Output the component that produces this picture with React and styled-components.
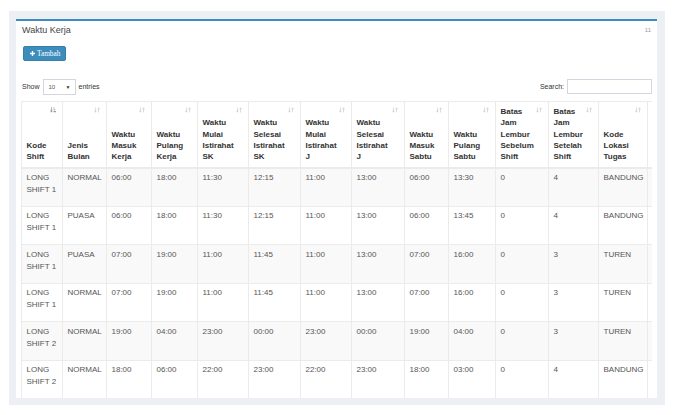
import React from "react";
import styled, { createGlobalStyle } from "styled-components";

const GlobalStyle = createGlobalStyle`
  html, body {
    margin: 0;
    padding: 0;
    background: #ffffff;
  }
  body {
    font-family: "Liberation Sans", Arial, sans-serif;
    color: #333;
  }
`;

const colors = {
  blue: "#3c8dbc",
  blueDark: "#367fa9",
  grey: "#ecf0f5",
  line: "#ebebeb",
  stripe: "#f9f9f9",
  text: "#555",
  head: "#333",
};

const Page = styled.div`
  box-sizing: border-box;
  width: 676px;
  height: 415px;
  padding: 11px 11px 10px 9px;
`;

const Content = styled.div`
  box-sizing: border-box;
  height: 100%;
  background: ${colors.grey};
  padding: 8px 8px 7px 7px;
`;

const Box = styled.div`
  box-sizing: border-box;
  height: 100%;
  background: #fff;
  border-top: 2px solid ${colors.blue};
  overflow: hidden;
  display: flex;
  flex-direction: column;
`;

const BoxHeader = styled.div`
  display: flex;
  justify-content: space-between;
  align-items: flex-start;
  padding: 4px 6px 0 6px;
  height: 11px;
`;

const Title = styled.h3`
  margin: 0;
  font-size: 9px;
  line-height: 11px;
  font-weight: 400;
  color: #444;
`;

const Counter = styled.span`
  font-size: 6px;
  line-height: 11px;
  color: #999;
`;

const BoxBody = styled.div`
  padding: 0 5px;
`;

const Toolbar = styled.div`
  display: flex;
  padding: 10px 0 0 2px;
`;

const Button = styled.button`
  box-sizing: border-box;
  display: inline-flex;
  align-items: center;
  gap: 2px;
  height: 15px;
  width: 43px;
  padding: 0 0 0 6px;
  border: 1px solid ${colors.blueDark};
  border-radius: 2px;
  background: ${colors.blue};
  color: #fff;
  font-family: "Liberation Serif", "Times New Roman", serif;
  font-size: 7.3px;
  cursor: pointer;
`;

const Controls = styled.div`
  display: flex;
  justify-content: space-between;
  align-items: center;
  margin-top: 17.5px;
  padding-left: 1px;
  height: 16px;
  font-size: 7px;
  color: #333;
`;

const Field = styled.label`
  display: flex;
  align-items: center;
  gap: 3px;
`;

const FakeSelect = styled.span`
  box-sizing: border-box;
  display: inline-flex;
  align-items: center;
  justify-content: space-between;
  width: 33px;
  height: 16px;
  padding: 0 4px 0 5px;
  border: 1px solid #d2d6de;
  font-size: 6px;
  color: #555;
`;

const Caret = styled.span`
  font-size: 5px;
  color: #333;
`;

const SearchInput = styled.span`
  box-sizing: border-box;
  display: inline-block;
  width: 85px;
  height: 15px;
  border: 1px solid #d2d6de;
`;

const TableWrap = styled.div`
  margin-top: 6.5px;
  width: 631px;
  overflow: hidden;
`;

const Table = styled.table`
  border-collapse: collapse;
  table-layout: fixed;
  width: 696px;
  font-size: 8px;
`;

const HeadCell = styled.th`
  position: relative;
  box-sizing: border-box;
  padding: 4px 14px 4.5px 4.5px;
  border: 1px solid ${colors.line};
  border-bottom-width: 2px;
  text-align: left;
  vertical-align: bottom;
  font-weight: 700;
  line-height: 11.3px;
  color: ${colors.head};
  white-space: nowrap;
`;

const SortIcon = styled.svg`
  position: absolute;
  top: 5px;
  right: 6px;
  width: 6px;
  height: 6px;
  fill: ${(p) => (p.$active ? "#9a9a9a" : "#d4d4d4")};
`;

const Row = styled.tr`
  height: 38.5px;
  background: ${(p) => (p.$odd ? colors.stripe : "#fff")};
`;

const Cell = styled.td`
  box-sizing: border-box;
  padding: 3.5px 4.5px;
  border: 1px solid ${colors.line};
  vertical-align: top;
  color: ${colors.text};
  line-height: 12px;
`;

const PlusIcon = () => (
  <svg width="5" height="5" viewBox="0 0 10 10" fill="#fff">
    <rect x="3.6" y="0" width="2.8" height="10" />
    <rect x="0" y="3.6" width="10" height="2.8" />
  </svg>
);

const SortBoth = () => (
  <SortIcon viewBox="0 0 12 12">
    <rect x="2" y="1" width="1.6" height="8" />
    <polygon points="0,7.5 5.6,7.5 2.8,11.5" />
    <rect x="8.4" y="3" width="1.6" height="8" />
    <polygon points="6.4,4.5 12,4.5 9.2,0.5" />
  </SortIcon>
);

const SortAsc = () => (
  <SortIcon viewBox="0 0 12 12" $active>
    <rect x="2" y="0.5" width="1.6" height="8" />
    <polygon points="0,7 5.6,7 2.8,11.5" />
    <rect x="7" y="1" width="2" height="2" />
    <rect x="7" y="4.5" width="3.5" height="2" />
    <rect x="7" y="8" width="5" height="2.5" />
  </SortIcon>
);

const columns = [
  { width: 41, lines: ["Kode", "Shift"] },
  { width: 44, lines: ["Jenis", "Bulan"] },
  { width: 45, lines: ["Waktu", "Masuk", "Kerja"] },
  { width: 46, lines: ["Waktu", "Pulang", "Kerja"] },
  { width: 51, lines: ["Waktu", "Mulai", "Istirahat", "SK"] },
  { width: 52, lines: ["Waktu", "Selesai", "Istirahat", "SK"] },
  { width: 51, lines: ["Waktu", "Mulai", "Istirahat", "J"] },
  { width: 53, lines: ["Waktu", "Selesai", "Istirahat", "J"] },
  { width: 44, lines: ["Waktu", "Masuk", "Sabtu"] },
  { width: 47, lines: ["Waktu", "Pulang", "Sabtu"] },
  { width: 53, lines: ["Batas", "Jam", "Lembur", "Sebelum", "Shift"] },
  { width: 50, lines: ["Batas", "Jam", "Lembur", "Setelah", "Shift"] },
  { width: 49, lines: ["Kode", "Lokasi", "Tugas"] },
  { width: 70, lines: [] },
];

const rows = [
  ["LONG SHIFT 1", "NORMAL", "06:00", "18:00", "11:30", "12:15", "11:00", "13:00", "06:00", "13:30", "0", "4", "BANDUNG"],
  ["LONG SHIFT 1", "PUASA", "06:00", "18:00", "11:30", "12:15", "11:00", "13:00", "06:00", "13:45", "0", "4", "BANDUNG"],
  ["LONG SHIFT 1", "PUASA", "07:00", "19:00", "11:00", "11:45", "11:00", "13:00", "07:00", "16:00", "0", "3", "TUREN"],
  ["LONG SHIFT 1", "NORMAL", "07:00", "19:00", "11:00", "11:45", "11:00", "13:00", "07:00", "16:00", "0", "3", "TUREN"],
  ["LONG SHIFT 2", "NORMAL", "19:00", "04:00", "23:00", "00:00", "23:00", "00:00", "19:00", "04:00", "0", "3", "TUREN"],
  ["LONG SHIFT 2", "NORMAL", "18:00", "06:00", "22:00", "23:00", "22:00", "23:00", "18:00", "03:00", "0", "4", "BANDUNG"],
];

const App = () => {
  return (
    <>
      <GlobalStyle />
      <Page>
        <Content>
          <Box>
            <BoxHeader>
              <Title>Waktu Kerja</Title>
              <Counter>11</Counter>
            </BoxHeader>

            <BoxBody>
              <Toolbar>
                <Button>
                  <PlusIcon />
                  Tambah
                </Button>
              </Toolbar>

              <Controls>
                <Field>
                  Show
                  <FakeSelect>
                    10 <Caret>▼</Caret>
                  </FakeSelect>
                  entries
                </Field>
                <Field>
                  Search:
                  <SearchInput />
                </Field>
              </Controls>

              <TableWrap>
                <Table>
                  <colgroup>
                    {columns.map((c, i) => (
                      <col key={i} style={{ width: c.width }} />
                    ))}
                  </colgroup>
                  <thead>
                    <tr>
                      {columns.map((c, i) => (
                        <HeadCell key={i}>
                          {c.lines.map((l, j) => (
                            <React.Fragment key={j}>
                              {j > 0 && <br />}
                              {l}
                            </React.Fragment>
                          ))}
                          {i === 0 ? <SortAsc /> : <SortBoth />}
                        </HeadCell>
                      ))}
                    </tr>
                  </thead>
                  <tbody>
                    {rows.map((r, i) => (
                      <Row key={i} $odd={i % 2 === 0}>
                        {r.map((v, j) => (
                          <Cell key={j}>{v}</Cell>
                        ))}
                        <Cell />
                      </Row>
                    ))}
                  </tbody>
                </Table>
              </TableWrap>
            </BoxBody>
          </Box>
        </Content>
      </Page>
    </>
  );
};

export default App;
